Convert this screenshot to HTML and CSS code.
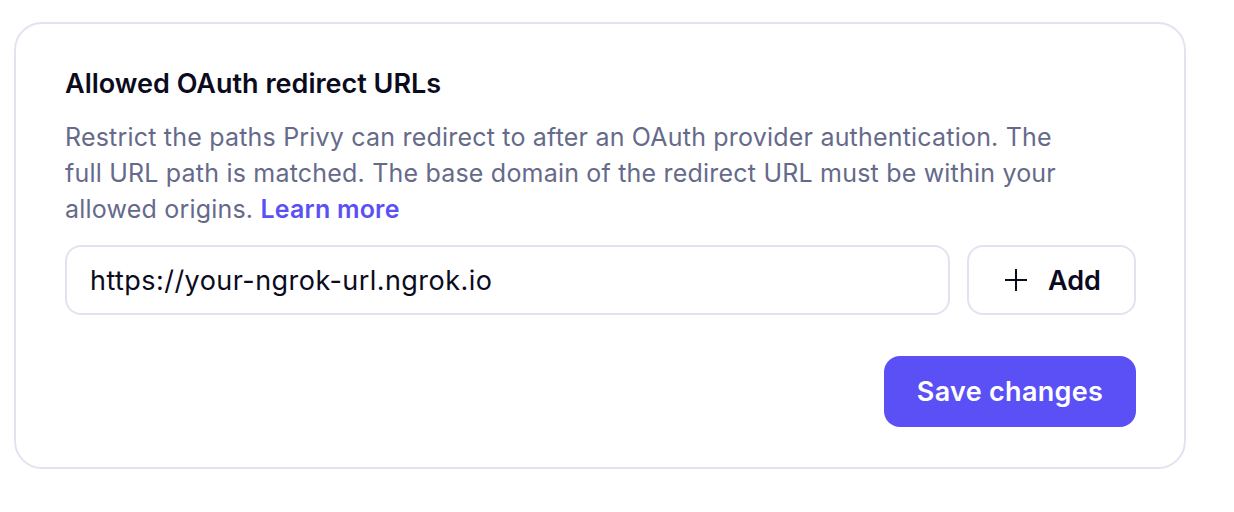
FILE: index.html
```html
<!DOCTYPE html>
<html lang="en">
<head>
<meta charset="utf-8">
<title>Allowed OAuth redirect URLs</title>
<link rel="stylesheet" href="styles.css">
</head>
<body>
<section class="card">
  <h2 class="title">Allowed OAuth redirect URLs</h2>
  <p class="desc">Restrict the paths Privy can redirect to after an OAuth provider authentication. The full URL path is matched. The base domain of the redirect URL must be within your allowed origins. <a class="link" href="#">Learn more</a></p>
  <div class="row">
    <div class="input">https://your-ngrok-url.ngrok.io</div>
    <button class="add" type="button">
      <svg class="plus" width="22" height="22" viewBox="0 0 22 22" fill="none" stroke="currentColor" stroke-width="2"><path d="M11 0v22M0 11h22"/></svg>
      <span>Add</span>
    </button>
  </div>
  <div class="actions">
    <button class="save" type="button">Save changes</button>
  </div>
</section>
</body>
</html>
```
FILE: styles.css
```css
* { box-sizing: border-box; }
html, body { margin: 0; background: #ffffff; }
body {
  padding: 22px 0 0 14px;
  font-family: Inter, "Noto Sans", "Liberation Sans", sans-serif;
  color: #0b0b1e;
}
.card {
  width: 1172px;
  border: 2px solid #e4e2f0;
  border-radius: 28px;
  padding: 42px 48px 40px 49px;
}
.title {
  margin: 0;
  font-size: 27px;
  line-height: 36px;
  font-weight: 600;
  color: #0b0b1e;
}
.desc {
  margin: 17px 0 0;
  max-width: 1005px;
  font-size: 25px;
  line-height: 36px;
  letter-spacing: 0.2px;
  color: #666a8a;
}
.link {
  color: #5b50f6;
  font-weight: 600;
  text-decoration: none;
}
.row {
  display: flex;
  gap: 17px;
  margin-top: 18px;
}
.input {
  flex: 1;
  height: 70px;
  display: flex;
  align-items: center;
  padding: 0 23px;
  border: 2px solid #e4e2f0;
  border-radius: 16px;
  font-size: 27px;
  letter-spacing: 0.45px;
  color: #0b0b1e;
}
.add {
  width: 169px;
  height: 70px;
  display: flex;
  align-items: center;
  gap: 21px;
  border: 2px solid #e4e2f0;
  border-radius: 16px;
  background: #ffffff;
  font-family: inherit;
  font-size: 27px;
  font-weight: 600;
  color: #0b0b1e;
  padding: 0 0 0 36px;
}
.plus { display: block; flex: none; }
.actions {
  display: flex;
  justify-content: flex-end;
  margin-top: 41px;
}
.save {
  width: 252px;
  height: 71px;
  border: 0;
  border-radius: 16px;
  background: #5a50f6;
  color: #ffffff;
  font-family: inherit;
  font-size: 27px;
  font-weight: 600;
  letter-spacing: 0.3px;
  padding: 0;
}
```
